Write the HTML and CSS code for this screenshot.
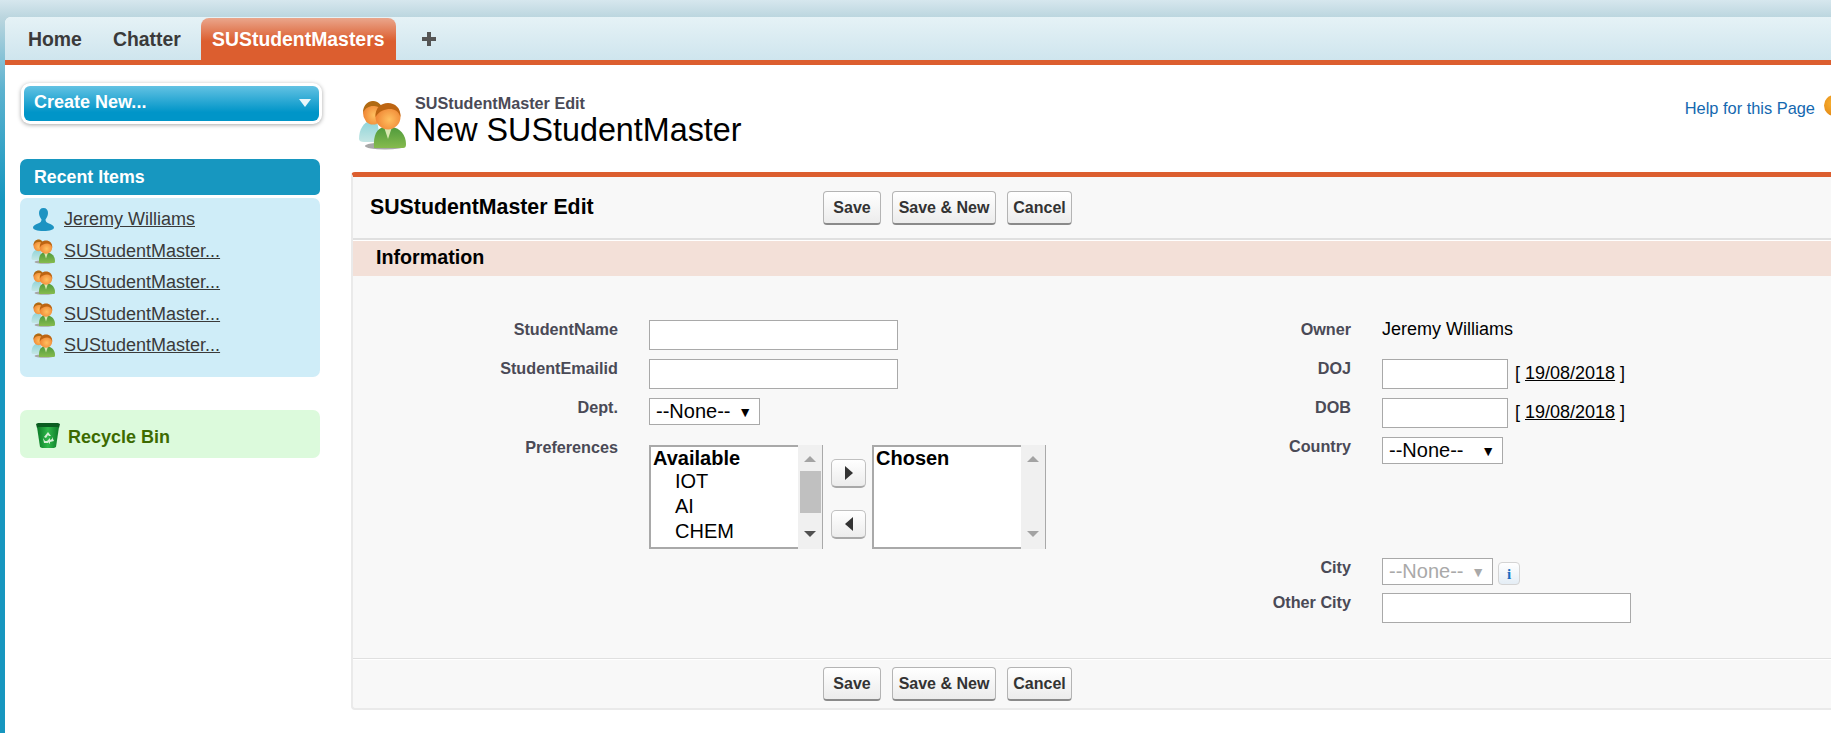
FILE: index.html
```html
<!DOCTYPE html>
<html lang="en">
<head>
    <meta charset="UTF-8">
    <title>SUStudentMaster Edit</title>
    <link rel="stylesheet" href="styles.css">
</head>
<body>
    <svg class="defs" width="0" height="0">
        <defs>
            <radialGradient id="skin" cx="55%" cy="60%" r="60%">
                <stop offset="0" stop-color="#ffc060"/>
                <stop offset="1" stop-color="#ee8030"/>
            </radialGradient>
            <linearGradient id="shirtGreen" x1="0" y1="0" x2="0" y2="1">
                <stop offset="0" stop-color="#4f9a3c"/>
                <stop offset="1" stop-color="#86bb4e"/>
            </linearGradient>
            <linearGradient id="shirtTeal" x1="0" y1="0" x2="0" y2="1">
                <stop offset="0" stop-color="#8fd4d8"/>
                <stop offset="1" stop-color="#c4e6e4"/>
            </linearGradient>
            <linearGradient id="binGreen" x1="0" y1="0" x2="1" y2="0">
                <stop offset="0" stop-color="#0c7a28"/>
                <stop offset=".5" stop-color="#2fb84a"/>
                <stop offset="1" stop-color="#0c7a28"/>
            </linearGradient>
            <symbol id="people" viewBox="0 0 48 50">
                <ellipse cx="27" cy="46" rx="20" ry="3.500" fill="#a8a8a8"/>
                <path d="M1 39c0-10 5-17 11-18h7l4 21H6c-3 0-5-1-5-3z" fill="url(#shirtTeal)"/>
                <ellipse cx="15" cy="13" rx="10" ry="11.500" fill="url(#skin)"/>
                <path d="M5 13C5 5 10 1 15 1s10 4 10 11c-3-5-6-6-10-6s-8 2-10 7z" fill="#b06a12"/>
                <path d="M16 48c-1-13 3-20 10-21h8c8 1 14 8 14 17 0 3-1 4-3 4z" fill="url(#shirtGreen)"/>
                <path d="M26 27h8l-4 12z" fill="#d8e8b0"/>
                <circle cx="30" cy="17" r="12.500" fill="url(#skin)"/>
                <path d="M17.500 17C17 8 23 3 30 3s13 5 12.500 14c-2-6-6-8-10.500-8-5 0-11 2-14.500 8z" fill="#bd6512"/>
            </symbol>
        </defs>
    </svg>

    <div class="page">
        <nav class="tabs">
            <a class="tab">Home</a>
            <a class="tab">Chatter</a>
            <a class="tab tab-active">SUStudentMasters</a>
            <svg class="tab-plus" width="14" height="14" viewBox="0 0 14 14"><path d="M5 0h4v5h5v4H9v5H5V9H0V5h5z" fill="#555"/></svg>
        </nav>

        <div class="layout">
            <aside class="sidebar">
                <div class="create-wrap">
                    <div class="create-new">
                        <span>Create New...</span>
                        <span class="create-arrow"></span>
                    </div>
                </div>

                <div class="recent-head">Recent Items</div>
                <ul class="recent-list">
                    <li>
                        <span class="recent-icon">
                            <svg width="21" height="23" viewBox="0 0 21 23"><path d="M10.5 0c3 0 4.500 2 4.500 5 0 3-1.500 5-2.500 6.500 0 2 1 3 3.500 4 2.500 1 5 2 5 4 0 2-4 3.500-10.500 3.500S0 21.500 0 19.500c0-2 2.500-3 5-4 2.500-1 3.500-2 3.500-4C7.500 10 6 8 6 5c0-3 1.500-5 4.500-5z" fill="#1d93c2"/></svg>
                        </span>
                        <a>Jeremy Williams</a>
                    </li>
                    <li><span class="recent-icon"><svg width="24" height="25"><use href="#people"/></svg></span><a>SUStudentMaster...</a></li>
                    <li><span class="recent-icon"><svg width="24" height="25"><use href="#people"/></svg></span><a>SUStudentMaster...</a></li>
                    <li><span class="recent-icon"><svg width="24" height="25"><use href="#people"/></svg></span><a>SUStudentMaster...</a></li>
                    <li><span class="recent-icon"><svg width="24" height="25"><use href="#people"/></svg></span><a>SUStudentMaster...</a></li>
                </ul>

                <div class="recycle">
                    <svg width="24" height="25" viewBox="0 0 24 25">
                        <path d="M0 1l2-1h20l2 1-1 4H1z" fill="#0a5c20"/>
                        <path d="M1 4h22l-3 20-2 1H6l-2-1z" fill="url(#binGreen)"/>
                        <path d="M12 9l3 4h-2l-1-1-2 3-2-1zM16 14l2 4-4 1v2l-3-3 3-3v2l2-1zM7 15l2 3h3v2H8z" fill="#d8efd8"/>
                    </svg>
                    <span class="recycle-text">Recycle Bin</span>
                </div>
            </aside>

            <main class="main">
                <div class="page-head">
                    <svg class="page-icon" width="48" height="50"><use href="#people"/></svg>
                    <div class="page-titles">
                        <div class="page-sub">SUStudentMaster Edit</div>
                        <h1 class="page-title">New SUStudentMaster</h1>
                    </div>
                    <div class="help">
                        <a>Help for this Page</a>
                        <span class="help-icon"></span>
                    </div>
                </div>

                <form class="panel">
                    <div class="panel-top">
                        <h2 class="panel-title">SUStudentMaster Edit</h2>
                        <div class="btn-row">
                            <button type="button" class="btn btn-save">Save</button>
                            <button type="button" class="btn btn-new">Save &amp; New</button>
                            <button type="button" class="btn btn-cancel">Cancel</button>
                        </div>
                    </div>

                    <h3 class="section-title">Information</h3>

                    <div class="form-body">
                        <div class="col col-left">
                            <div class="row row-30">
                                <label class="lbl">StudentName</label>
                                <input class="text-in" type="text">
                            </div>
                            <div class="row row-30">
                                <label class="lbl">StudentEmailid</label>
                                <input class="text-in" type="text">
                            </div>
                            <div class="row row-31">
                                <label class="lbl">Dept.</label>
                                <span class="pick pick-dept">--None--<i class="pick-arrow">▼</i></span>
                            </div>
                            <div class="row">
                                <label class="lbl">Preferences</label>
                                <div class="multi">
                                    <div class="listbox">
                                        <div class="list-items">
                                            <b>Available</b>
                                            <span>IOT</span>
                                            <span>AI</span>
                                            <span>CHEM</span>
                                        </div>
                                        <div class="scroll">
                                            <i class="sc-up"></i>
                                            <i class="sc-thumb"></i>
                                            <i class="sc-down"></i>
                                        </div>
                                    </div>
                                    <div class="move-btns">
                                        <span class="move"><i class="tri-right"></i></span>
                                        <span class="move"><i class="tri-left"></i></span>
                                    </div>
                                    <div class="listbox">
                                        <div class="list-items"><b>Chosen</b></div>
                                        <div class="scroll scroll-off">
                                            <i class="sc-up"></i>
                                            <i class="sc-down"></i>
                                        </div>
                                    </div>
                                </div>
                            </div>
                        </div>

                        <div class="col col-right">
                            <div class="row row-30">
                                <label class="lbl">Owner</label>
                                <span class="value">Jeremy Williams</span>
                            </div>
                            <div class="row row-30">
                                <label class="lbl">DOJ</label>
                                <input class="date-in" type="text">
                                <span class="date-link">[ <a>19/08/2018</a> ]</span>
                            </div>
                            <div class="row row-30">
                                <label class="lbl">DOB</label>
                                <input class="date-in" type="text">
                                <span class="date-link">[ <a>19/08/2018</a> ]</span>
                            </div>
                            <div class="row row-112">
                                <label class="lbl">Country</label>
                                <span class="pick pick-country">--None--<i class="pick-arrow">▼</i></span>
                            </div>
                            <div class="row row-26">
                                <label class="lbl">City</label>
                                <span class="pick pick-city">--None--<i class="pick-arrow">▼</i></span>
                                <span class="info-btn">i</span>
                            </div>
                            <div class="row row-30">
                                <label class="lbl">Other City</label>
                                <input class="text-in" type="text">
                            </div>
                        </div>
                    </div>

                    <div class="panel-bottom">
                        <button type="button" class="btn btn-save">Save</button>
                        <button type="button" class="btn btn-new">Save &amp; New</button>
                        <button type="button" class="btn btn-cancel">Cancel</button>
                    </div>
                </form>
            </main>
        </div>
    </div>
</body>
</html>
```

FILE: styles.css
```css
* {
    margin: 0;
    padding: 0;
    box-sizing: border-box;
}
html, body {
    height: 100%;
    overflow: hidden;
}
body {
    font-family: "Liberation Sans", Arial, sans-serif;
    color: #000;
    background: linear-gradient(#d6e7ee 0, #bcd6df 17px, #5cb2cf 90px, #1696bf 200px, #1696bf 100%);
}
.defs {
    position: absolute;
}
.page {
    margin: 17px 0 0 5px;
    height: 716px;
    background: #fff;
    border-top-left-radius: 6px;
}

/* tabs */
.tabs {
    display: flex;
    align-items: flex-end;
    height: 48px;
    padding-left: 12px;
    border-bottom: 5px solid #dc5e2f;
    border-top-left-radius: 6px;
    background: linear-gradient(#e5f2f6, #cfe5ee);
}
.tab {
    height: 42px;
    padding: 0 11px;
    margin-right: 9px;
    font-size: 19.400px;
    font-weight: bold;
    line-height: 42px;
    color: #3a3a3a;
}
.tab-active {
    width: 195px;
    padding: 0;
    margin-right: 26px;
    border-radius: 8px 8px 0 0;
    text-align: center;
    color: #fff;
    background: linear-gradient(#eaa68c 0, #dc5e2f 55%);
}
.tab-plus {
    align-self: center;
}

/* sidebar */
.layout {
    display: flex;
}
.sidebar {
    width: 300px;
    margin-left: 15px;
    padding-top: 18px;
    flex-shrink: 0;
}
.create-wrap {
    width: 301px;
    margin-left: 1px;
    padding: 3px;
    border-radius: 9px;
    background: #fff;
    box-shadow: 0 1px 4px rgba(0, 0, 0, .35);
}
.create-new {
    display: flex;
    justify-content: space-between;
    align-items: center;
    height: 35px;
    padding: 0 8px 2px 10px;
    border-radius: 6px;
    font-size: 18px;
    font-weight: bold;
    color: #fff;
    background: linear-gradient(#63c2e3, #0095c8 75%);
}
.create-arrow {
    width: 0;
    height: 0;
    border-left: 6px solid transparent;
    border-right: 6px solid transparent;
    border-top: 8px solid #fff;
    opacity: .9;
}
.recent-head {
    height: 36px;
    margin-top: 35px;
    padding-left: 14px;
    border-radius: 7px 7px 5px 5px;
    font-size: 17.800px;
    font-weight: bold;
    line-height: 36px;
    color: #fff;
    background: #1797c0;
}
.recent-list {
    height: 179px;
    margin-top: 3px;
    padding-top: 6px;
    border-radius: 7px;
    list-style: none;
    background: #cfedf8;
}
.recent-list li {
    display: flex;
    align-items: center;
    height: 31.5px;
    font-size: 18px;
    color: #3a3a3a;
}
.recent-list a {
    text-decoration: underline;
}
.recent-icon {
    display: flex;
    justify-content: center;
    width: 44px;
    padding-left: 2px;
}
.recycle {
    display: flex;
    align-items: center;
    gap: 8px;
    height: 48px;
    margin-top: 33px;
    padding: 3px 0 0 16px;
    border-radius: 7px;
    font-size: 18px;
    font-weight: bold;
    color: #3c6a00;
    background: #dcfadc;
}
.recycle-text {
    margin-top: 4px;
}

/* main column */
.main {
    flex: 1;
    margin-left: 31px;
}
.page-head {
    display: flex;
    height: 107px;
    padding: 35px 0 0 7px;
}
.page-icon {
    flex-shrink: 0;
}
.page-titles {
    margin-left: 7px;
    flex: 1;
}
.page-sub {
    margin: -7px 0 0 2px;
    font-size: 16.200px;
    font-weight: bold;
    line-height: 20px;
    color: #4a4a56;
}
.page-title {
    font-size: 32.300px;
    font-weight: normal;
    line-height: 35px;
}
.help {
    display: flex;
    align-items: flex-start;
    margin-right: -14px;
    font-size: 16.400px;
    color: #1468b0;
}
.help a {
    line-height: 16px;
}
.help-icon {
    width: 21px;
    height: 21px;
    margin: -5px 0 0 9px;
    border-radius: 50%;
    background: radial-gradient(circle at 40% 40%, #f8b030, #dd7c0c);
}

/* panel */
.panel {
    height: 538px;
    border-top: 5px solid #dc5e2f;
    border-left: 2px solid #eaeaea;
    border-bottom: 2px solid #eaeaea;
    border-radius: 4px 0 0 4px;
    background: #f8f8f8;
}
.panel-top {
    display: flex;
    align-items: flex-start;
    height: 64px;
    padding: 14px 0 0 17px;
    border-bottom: 1px solid #fff;
    box-shadow: inset 0 -2px 0 #e0e0e0;
}
.panel-title {
    width: 453px;
    font-size: 21.300px;
    line-height: 32px;
}
.btn-row, .panel-bottom {
    display: flex;
    gap: 11px;
}
.btn {
    height: 34px;
    border: 1px solid #b4b4b4;
    border-bottom: 2px solid #8a8a8a;
    border-radius: 4px;
    font-family: inherit;
    font-size: 16px;
    font-weight: bold;
    color: #333;
    background: linear-gradient(#fff, #ececec);
}
.btn-save { width: 58px; }
.btn-new { width: 104px; }
.btn-cancel { width: 65px; }

.section-title {
    height: 35px;
    padding-left: 23px;
    font-size: 19.700px;
    line-height: 33px;
    background: #f3e0d8;
}
.form-body {
    display: flex;
    height: 383px;
    padding-top: 44px;
    border-bottom: 1px solid #e0e0e0;
    box-shadow: 0 1px 0 #fff;
}
.col {
    flex-shrink: 0;
}
.col-left {
    width: 733px;
}
.row {
    display: flex;
    align-items: flex-start;
    margin-bottom: 9px;
}
.row-26 { height: 26px; }
.row-30 { height: 30px; }
.row-31 { height: 31px; }
.row-112 { height: 112px; }
.lbl {
    flex-shrink: 0;
    width: 265px;
    margin-right: 31px;
    font-size: 16.200px;
    font-weight: bold;
    line-height: 18px;
    text-align: right;
    color: #4a4a56;
}
.text-in, .date-in {
    height: 30px;
    border: 1px solid #a9a9a9;
    background: #fff;
}
.text-in {
    width: 249px;
}
.date-in {
    width: 126px;
}
.value {
    font-size: 18px;
    line-height: 18px;
}
.date-link {
    margin: 3px 0 0 7px;
    font-size: 18px;
    line-height: 22px;
}
.date-link a {
    text-decoration: underline;
}

/* fake selects */
.pick {
    display: flex;
    align-items: center;
    height: 27px;
    padding-left: 6px;
    border: 1px solid #a9a9a9;
    font-size: 20px;
    white-space: nowrap;
    background: #fff;
}
.pick-arrow {
    margin-left: auto;
    padding-right: 7px;
    font-size: 14px;
    font-style: normal;
}
.pick-dept { width: 111px; }
.pick-country { width: 121px; }
.pick-city {
    width: 111px;
    color: #a9a9a9;
}
.info-btn {
    width: 22px;
    height: 23px;
    margin: 4px 0 0 5px;
    border: 1px solid #d4d4d4;
    border-radius: 4px;
    font-family: "Liberation Serif", serif;
    font-size: 15px;
    font-weight: bold;
    line-height: 22px;
    text-align: center;
    color: #1a6ec0;
    background: linear-gradient(#fff, #e4edf5);
}

/* multi select lists */
.multi {
    display: flex;
    margin-top: 7px;
}
.listbox {
    display: flex;
    width: 174px;
    height: 104px;
    border: 2px solid #a9a9a9;
    border-right-width: 1px;
    background: #fff;
}
.list-items {
    flex: 1;
    padding-left: 2px;
    font-size: 20px;
    line-height: 25px;
    overflow: hidden;
}
.list-items b {
    display: block;
    line-height: 22px;
}
.list-items span {
    display: block;
    padding-left: 22px;
}
.scroll {
    position: relative;
    width: 24px;
    margin: -2px 0;
    background: #f0f0f0;
}
.sc-thumb {
    position: absolute;
    top: 26px;
    left: 2px;
    width: 21px;
    height: 42px;
    background: #c0c0c0;
}
.sc-up, .sc-down {
    position: absolute;
    left: 6px;
    width: 0;
    height: 0;
    border-left: 6px solid transparent;
    border-right: 6px solid transparent;
}
.sc-up {
    top: 11px;
    border-bottom: 6px solid #a3a3a3;
}
.sc-down {
    bottom: 12px;
    border-top: 6px solid #505050;
}
.scroll-off .sc-down {
    border-top-color: #a3a3a3;
}
.move-btns {
    display: flex;
    flex-direction: column;
    gap: 22px;
    width: 49px;
    padding: 14px 0 0 8px;
}
.move {
    display: flex;
    align-items: center;
    justify-content: center;
    width: 35px;
    height: 29px;
    border: 1px solid #c0c0c0;
    border-bottom: 2px solid #a8a8a8;
    border-radius: 5px;
    background: linear-gradient(#fff, #ececec);
}
.tri-right, .tri-left {
    width: 0;
    height: 0;
    border-top: 7px solid transparent;
    border-bottom: 7px solid transparent;
}
.tri-right {
    border-left: 8px solid #333;
}
.tri-left {
    border-right: 8px solid #333;
}
.panel-bottom {
    padding: 8px 0 0 470px;
}
```
